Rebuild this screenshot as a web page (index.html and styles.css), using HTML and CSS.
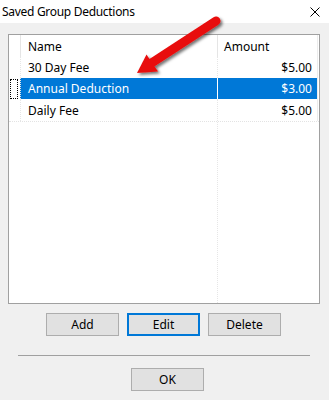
FILE: index.html
```html
<!DOCTYPE html>
<html lang="en">
<head>
	<meta charset="UTF-8">
	<title>Saved Group Deductions</title>
	<link rel="stylesheet" href="styles.css">
</head>
<body>
	<div class="window">
		<div class="titlebar">
			<span class="title">Saved Group Deductions</span>
			<svg class="close" width="10" height="10" viewBox="0 0 10 10">
				<path d="M0.5 0.5 L9.5 9.5 M9.5 0.5 L0.5 9.5" stroke="#000" stroke-width="1" fill="none"/>
			</svg>
		</div>

		<div class="content">
			<div class="list">
				<div class="list__header">
					<div class="cell cell--check"></div>
					<div class="cell cell--name">Name</div>
					<div class="cell cell--amount">Amount</div>
				</div>
				<div class="row">
					<div class="cell cell--check"></div>
					<div class="cell cell--name">30 Day Fee</div>
					<div class="cell cell--amount">$5.00</div>
				</div>
				<div class="row row--selected">
					<div class="cell cell--check"><span class="focus"></span></div>
					<div class="cell cell--name">Annual Deduction</div>
					<div class="cell cell--amount">$3.00</div>
				</div>
				<div class="row row--last">
					<div class="cell cell--check"></div>
					<div class="cell cell--name">Daily Fee</div>
					<div class="cell cell--amount">$5.00</div>
				</div>
				<div class="list__rest">
					<div class="cell cell--check"></div>
					<div class="cell cell--name"></div>
					<div class="cell cell--amount"></div>
				</div>
			</div>

			<div class="buttons">
				<button class="btn">Add</button>
				<button class="btn btn--default">Edit</button>
				<button class="btn">Delete</button>
			</div>

			<hr class="divider">

			<div class="buttons buttons--ok">
				<button class="btn">OK</button>
			</div>
		</div>

		<svg class="arrow" width="100" height="70" viewBox="0 0 100 70">
			<defs>
				<filter id="shadow" x="-20%" y="-20%" width="150%" height="150%">
					<feDropShadow dx="2" dy="2" stdDeviation="1.5" flood-color="#000" flood-opacity="0.55"/>
				</filter>
			</defs>
			<g filter="url(#shadow)" fill="#e8100f">
				<line x1="86" y1="11" x2="20" y2="54" stroke="#e8100f" stroke-width="9" stroke-linecap="round"/>
				<polygon points="7,63 16.5,44.5 28,61.5"/>
			</g>
		</svg>
	</div>
</body>
</html>
```

FILE: styles.css
```css
body {
	margin: 0;
	font-family: "Noto Sans", sans-serif;
	font-size: 12px;
	color: #000;
}
.window {
	position: relative;
	width: 329px;
	height: 400px;
	background: #f0f0f0;
	overflow: hidden;
}
.titlebar {
	height: 23px;
	background: #fff;
	display: flex;
	align-items: center;
	justify-content: space-between;
	padding: 0 9px 0 2px;
}
.title {
	letter-spacing: -0.3px;
}
.close {
	display: block;
	margin-top: 1px;
}
.content {
	padding-top: 11px;
}
.list {
	margin-left: 8px;
	width: 312px;
	height: 270px;
	box-sizing: border-box;
	border: 1px solid #a0a0a0;
	background: #fff;
	display: flex;
	flex-direction: column;
}
.list__header,
.row,
.list__rest {
	display: flex;
}
.list__header {
	height: 22px;
	align-items: center;
}
.row {
	height: 21px;
	align-items: center;
}
.list__rest {
	flex: 1;
}
.cell {
	box-sizing: border-box;
	height: 100%;
	display: flex;
	align-items: center;
	white-space: nowrap;
}
.cell--check {
	width: 11px;
	padding-left: 1px;
}
.cell--name {
	width: 197px;
	padding-left: 7px;
}
.cell--amount {
	width: 101px;
	padding: 0 5px 0 6px;
	justify-content: flex-end;
	border-right: 1px solid #ececec;
}
.list__header .cell--name,
.list__header .cell--amount {
	border-left: 1px solid #e5e5e5;
}
.list__header .cell--amount {
	justify-content: flex-start;
}
.row .cell--name,
.row .cell--amount,
.list__rest .cell--amount {
	border-left: 1px dotted #e6e6e6;
}
.list__rest .cell--amount {
	border-right: none;
}
.row--last {
	border-bottom: 1px dotted #e3e3e3;
	height: 22px;
}
.row--selected .cell--name,
.row--selected .cell--amount {
	background: #0078d7;
	color: #fff;
}
.row--selected .cell--amount {
	border-left: 1px solid #fff;
}
.focus {
	display: block;
	width: 8px;
	height: 20px;
	box-sizing: border-box;
	border: 1px dotted #000;
}
.buttons {
	display: flex;
	gap: 8px;
	margin-top: 9px;
	padding-left: 46px;
}
.buttons--ok {
	margin-top: 12px;
	padding-left: 131px;
}
.btn {
	width: 73px;
	height: 23px;
	box-sizing: border-box;
	border: 1px solid #adadad;
	background: #e1e1e1;
	font-family: inherit;
	font-size: 12px;
	color: #000;
	padding: 0;
}
.btn--default {
	border: 2px solid #0078d7;
}
.divider {
	margin: 19px 19px 0 18px;
	border: none;
	border-top: 1px solid #a0a0a0;
	height: 0;
}
.arrow {
	position: absolute;
	left: 130px;
	top: 10px;
}
```
